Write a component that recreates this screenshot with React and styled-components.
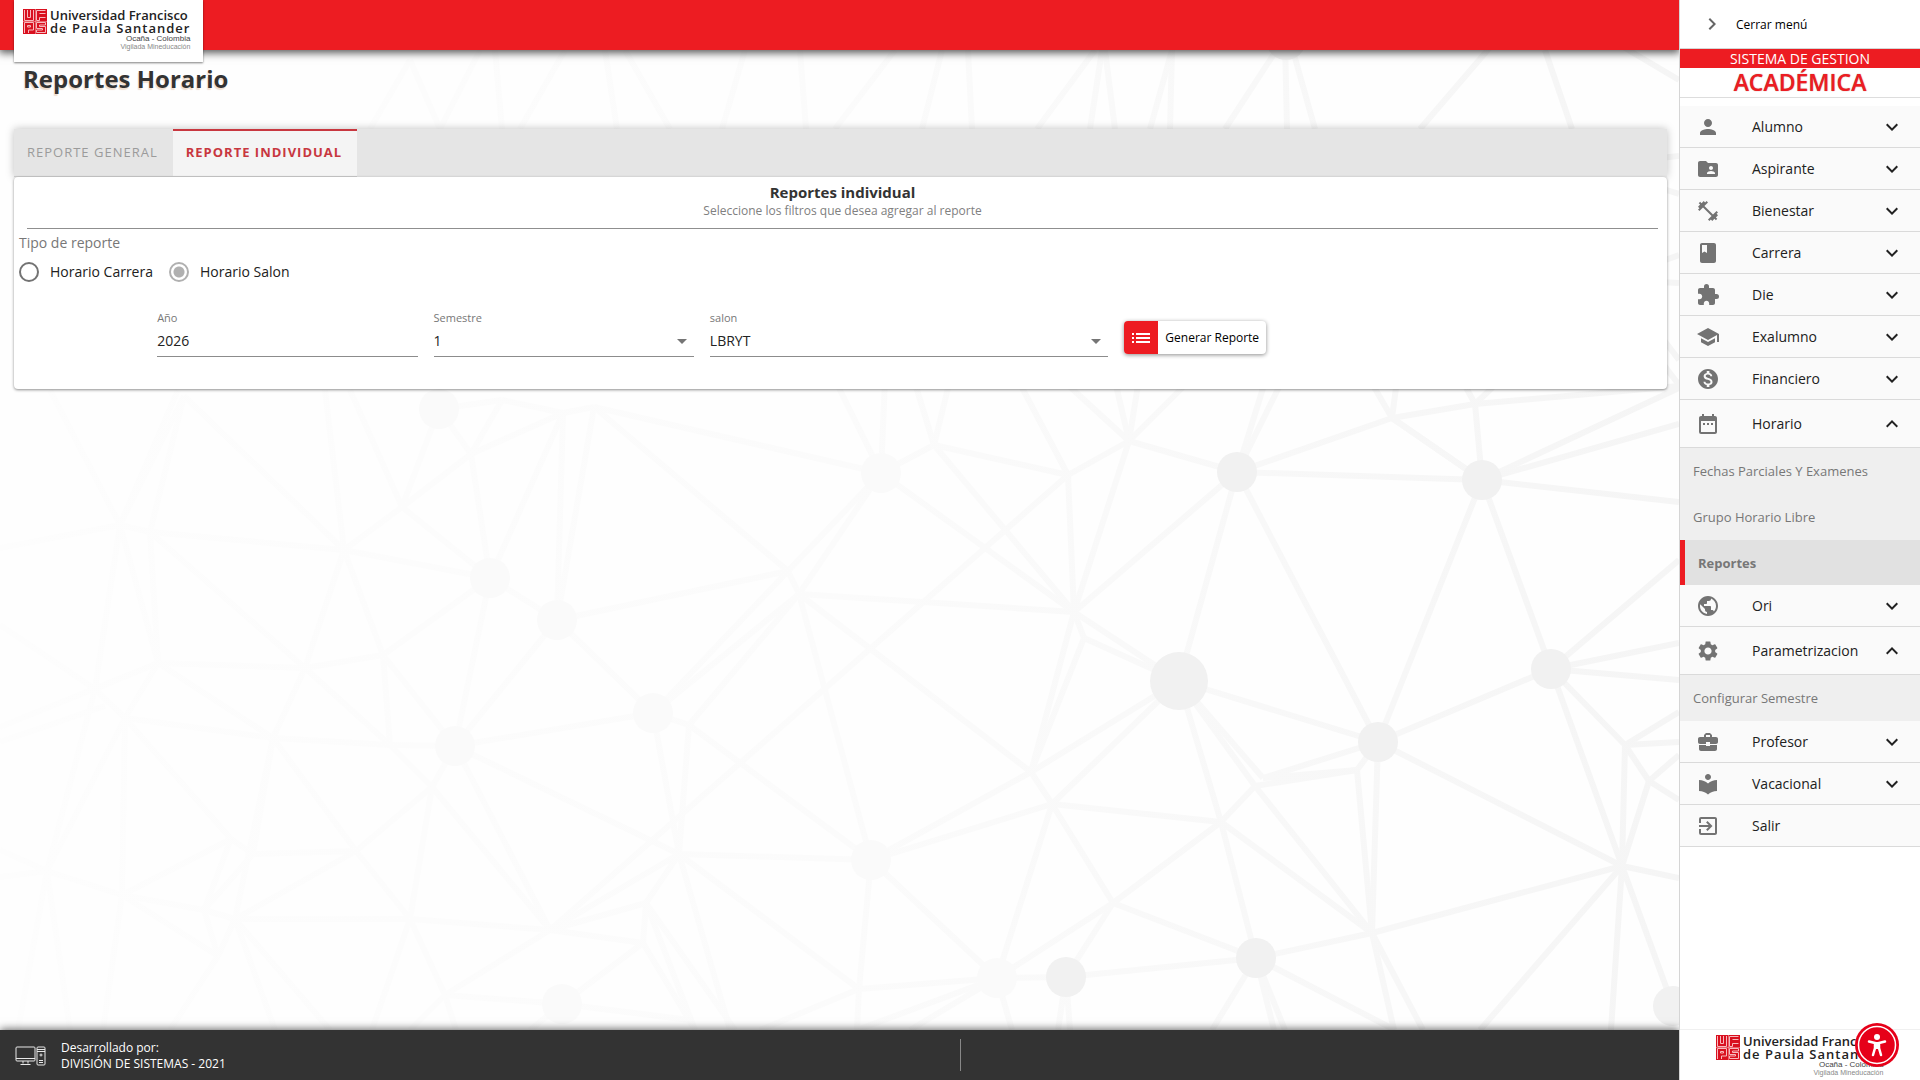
import React, { useState } from "react";
import styled, { createGlobalStyle, css } from "styled-components";
import {
  MdPerson, MdFolderShared, MdFitnessCenter, MdBook, MdExtension, MdSchool,
  MdMonetizationOn, MdDateRange, MdPublic, MdSettings, MdBusinessCenter,
  MdLocalLibrary, MdExitToApp, MdKeyboardArrowDown, MdKeyboardArrowUp,
  MdChevronRight, MdList,
} from "react-icons/md";

const RED = "#ed1c22";
const SANS = '"Open Sans", "Noto Sans", sans-serif';

const GlobalStyle = createGlobalStyle`
  *, *::before, *::after { box-sizing: border-box; }
  body { margin: 0; background: #fefefe; font-family: ${SANS}; color: #212121; }
  button, input, select { font-family: inherit; color: inherit; }
  h1, h2, p, ul, hr, fieldset { margin: 0; padding: 0; border: 0; }
  ul { list-style: none; }
`;

const Page = styled.div`
  display: flex;
  min-height: 100vh;
`;

const Main = styled.div`
  position: relative;
  isolation: isolate;
  flex: 1;
  min-width: 0;
  display: flex;
  flex-direction: column;
  overflow: hidden;
`;

const Backdrop = styled.svg`
  position: absolute;
  inset: 0;
  width: 100%;
  height: 100%;
  z-index: -1;
`;

const Header = styled.header`
  height: 50px;
  padding-left: 14px;
  background: ${RED};
  box-shadow: 0 2px 8px 1px rgba(0, 0, 0, 0.65);
`;

const LogoCard = styled.div`
  width: 189px;
  height: 62px;
  padding: 9px;
  background: #fff;
  box-shadow: 0 1px 2px rgba(0, 0, 0, 0.5);
`;

const LogoRow = styled.div`
  display: flex;
  gap: 3px;
  width: max-content;
`;

const LogoText = styled.div`
  display: flex;
  flex-direction: column;
  color: #222;
  font-size: 13px;
  font-weight: 600;
  line-height: 13px;
  white-space: nowrap;
`;

const LogoSpaced = styled.span`
  letter-spacing: 1px;
`;

const LogoSmall = styled.span`
  align-self: flex-end;
  font-family: "Liberation Sans", sans-serif;
  font-weight: 400;
  font-size: ${(p) => (p.$tiny ? "7px" : "8px")};
  line-height: 8px;
  color: ${(p) => (p.$tiny ? "#888" : "#444")};
`;

const Content = styled.main`
  flex: 1;
  padding: 11px 12px 0 14px;
`;

const PageTitle = styled.h1`
  padding-left: 9px;
  margin-bottom: 33px;
  font-size: 24px;
  line-height: 35px;
  font-weight: 700;
  color: #333;
  text-shadow: -1px 2px 1px #f0dfd0;
`;

const TabBar = styled.div`
  display: flex;
  height: 48px;
  background: #e5e5e5;
  box-shadow: 0 0 8px rgba(0, 0, 0, 0.25);
`;

const Tab = styled.button`
  padding: 0 15px 4px 13px;
  border: 0;
  border-top: 2px solid transparent;
  border-bottom: 1px solid #ccc;
  background: none;
  font-size: 13px;
  letter-spacing: 1px;
  color: #9b9b9b;
  ${(p) => p.$active && css`
    background: #f4f4f4;
    border-top-color: #c8373f;
    color: #c8373f;
    font-weight: 700;
  `}
`;

const Panel = styled.section`
  position: relative;
  padding: 5px 6px 32px 5px;
  background: #fff;
  border-radius: 4px;
  box-shadow: 0 1px 3px rgba(0, 0, 0, 0.45);
`;

const PanelHead = styled.div`
  margin: 0 3px 0 8px;
  padding-bottom: 9px;
  border-bottom: 1px solid #8f8f8f;
  text-align: center;
`;

const PanelTitle = styled.h2`
  font-size: 15px;
  line-height: 21px;
  font-weight: 700;
  color: #333;
`;

const PanelHint = styled.p`
  font-size: 12px;
  line-height: 16px;
  color: #808080;
`;

const RadioGroup = styled.fieldset`
  display: flex;
  flex-wrap: wrap;
  gap: 8px 16px;
`;

const Legend = styled.legend`
  padding: 3px 0 0;
  margin-bottom: 8px;
  font-size: 14px;
  line-height: 22px;
  color: #777;
`;

const RadioLabel = styled.label`
  display: flex;
  align-items: center;
  gap: 11px;
  font-size: 14px;
  line-height: 20px;
`;

const Radio = styled.input`
  appearance: none;
  width: 20px;
  height: 20px;
  margin: 0;
  border: 2px solid #737373;
  border-radius: 50%;
  &:checked {
    border-color: #b0b0b0;
    background: radial-gradient(circle, #b0b0b0 5px, transparent 6px);
  }
`;

const Filters = styled.div`
  display: grid;
  grid-template-columns: repeat(12, 1fr);
  gap: 16px;
  margin-top: 28px;
`;

const Field = styled.label`
  display: flex;
  flex-direction: column;
  grid-column: ${(p) => p.$column};
  font-size: 11px;
  line-height: 16px;
  color: #777;
`;

const controlStyle = css`
  width: 100%;
  height: 31px;
  padding: 0 0 1px;
  border: 0;
  border-bottom: 1px solid #8c8c8c;
  border-radius: 0;
  background: transparent;
  font-size: 14px;
  color: #222;
  outline: none;
`;

const TextInput = styled.input`${controlStyle}`;

const SelectBox = styled.span`
  display: grid;
  align-items: center;
  &::after {
    content: "";
    grid-area: 1 / 1;
    justify-self: end;
    margin-right: 7px;
    border: 5px solid transparent;
    border-top-color: #757575;
    border-bottom: 0;
    pointer-events: none;
  }
`;

const Select = styled.select`
  ${controlStyle}
  grid-area: 1 / 1;
  appearance: none;
`;

const GenerateButton = styled.button`
  grid-column: 9 / span 3;
  justify-self: start;
  align-self: start;
  display: flex;
  align-items: center;
  height: 33px;
  margin-top: 11px;
  padding: 0;
  border: 0;
  border-radius: 4px;
  background: #fff;
  box-shadow: 0 1px 4px rgba(0, 0, 0, 0.45);
  overflow: hidden;
  font-size: 12px;
  white-space: nowrap;
  color: #000;
`;

const ButtonIcon = styled.span`
  display: flex;
  align-items: center;
  justify-content: center;
  width: 34px;
  height: 100%;
  background: ${RED};
  color: #fff;
`;

const ButtonText = styled.span`
  padding: 0 7px;
`;

const Footer = styled.footer`
  display: grid;
  grid-template-columns: 50vw 1fr;
  align-items: center;
  height: 50px;
  background: #333;
  box-shadow: 0 -1px 8px rgba(0, 0, 0, 0.6);
  color: #fff;
`;

const Credits = styled.div`
  display: flex;
  align-items: center;
  gap: 15px;
  padding: 2px 0 0 15px;
  font-size: 12px;
  line-height: 16px;
`;

const FooterDivider = styled.div`
  height: 32px;
  border-left: 1px solid #888;
`;

const Sidebar = styled.aside`
  display: flex;
  flex-direction: column;
  width: 241px;
  flex: none;
  border-left: 1px solid #d5d5d5;
  background: #fff;
`;

const CloseMenu = styled.button`
  display: flex;
  align-items: center;
  gap: 12px;
  height: 49px;
  padding: 0 20px;
  border: 0;
  border-bottom: 1px solid #d5d5d5;
  background: #fff;
  font-size: 12px;
  color: #000;
  svg { color: #666; }
`;

const Brand = styled.div`
  margin-bottom: 8px;
  border-bottom: 1px solid #ddd;
  text-align: center;
`;

const BrandBand = styled.p`
  background: ${RED};
  color: #fff;
  font-size: 14px;
  line-height: 19px;
`;

const BrandName = styled.p`
  color: ${RED};
  font-size: 23px;
  font-weight: 600;
  line-height: 29px;
  text-shadow: 0 0 1px #a66;
`;

const MenuItem = styled.button`
  display: grid;
  grid-template-columns: 24px minmax(0, 1fr) 24px;
  align-items: center;
  width: 100%;
  height: ${(p) => (p.$open ? 48 : 42)}px;
  padding: 0 16px;
  border: 0;
  border-bottom: 1px solid #dadada;
  background: #fafafa;
  text-align: left;
  font-size: 14px;
  white-space: nowrap;
  > svg:first-child { color: #737373; }
`;

const MenuLabel = styled.span`
  padding-left: 32px;
`;

const SubLink = styled.a`
  display: flex;
  align-items: center;
  height: 46px;
  padding-left: 13px;
  background: #efefef;
  color: #777;
  font-size: 13px;
  text-decoration: none;
  ${(p) => p.$active && css`
    height: 45px;
    border-left: 5px solid ${RED};
    background: #e1e1e1;
    font-weight: 700;
  `}
`;

const SideFooter = styled.div`
  height: 51px;
  margin-top: auto;
  padding: 5px 0 0 36px;
  border-top: 1px solid #f0f0f0;
  overflow: hidden;
`;

const AccessButton = styled.button`
  position: fixed;
  right: 21px;
  bottom: 13px;
  width: 44px;
  height: 44px;
  padding: 0;
  border: 0;
  border-radius: 50%;
  background: none;
`;

const nodes = {
  a: [120, 525], b: [150, 532], c: [344, 550], d: [184, 396], e: [402, 507], f: [439, 409],
  g: [502, 400], h: [471, 454], i: [563, 413], j: [594, 407], k: [490, 578], l: [557, 620],
  m: [653, 713], n: [455, 746], o: [881, 473], p: [788, 571], q: [799, 594], r: [871, 860],
  s: [562, 1004], t: [95, 689], u: [158, 663], v: [305, 668], w: [383, 655], x: [125, 718],
  y: [273, 738], z: [390, 745], A: [432, 787], B: [356, 851], C: [253, 854], D: [231, 839],
  E: [47, 871], F: [122, 895], G: [204, 910], H: [235, 919], I: [410, 919], J: [550, 930],
  K: [679, 854], L: [689, 725], M: [646, 903], N: [643, 943], O: [445, 995], P: [218, 956],
  Q: [859, 989], R: [934, 445], S: [1068, 475], T: [1129, 441], U: [1237, 472], V: [1482, 480],
  W: [1074, 612], X: [1179, 681], Y: [1084, 638], Z: [1031, 772], 1: [1052, 804],
  2: [1378, 742], 3: [1551, 669], 4: [1221, 822], 5: [1255, 786], 6: [1263, 778],
  7: [1357, 770], 8: [1372, 933], 9: [1622, 866], "@": [1113, 903], "#": [1256, 958],
  "%": [1066, 977], "&": [997, 978], "+": [1392, 418], "=": [1475, 404], "?": [1625, 745],
  "!": [1649, 781], "*": [1673, 1006],
};

const links = (
  "ab bc ad bd cd ce ck he hf hg hi hk fg fe gi ij ki li lj jo jp op oq pl pm pq qm qL ek kl lm kn ln nm " +
  "at au bu bv uv ut ux xt xy uy vy vw cv cw wk wn wz vz yz zn zA yC yB yH xD xF xE tE DC CB DF DG CG HB BI AB AI AJ nA nJ nK " +
  "EF FG GH HI IJ FP GP PH JK JM JN JO JS MN MK KL mK mL Lr Kr KQ rQ qr Ns IO Os qW qZ oR RS ST RW oW SW TW TU UW UX U2 UV " +
  "+U +V +V =+ =V V2 V3 WX WY XY WZ YZ ZX Zr 1r 1Z 1X 14 1@ 1& X2 X4 X5 X6 62 67 57 27 28 78 45 4@ 4# 48 58 23 29 39 3? ?9 ?! !9 " +
  "89 8# #% #@ @& @% %& &r &Q 9*"
).split(" ");

const strays = [
  [0, 548, 120, 525], [0, 625, 95, 689], [0, 727, 158, 663], [0, 742, 105, 706],
  [0, 850, 47, 871], [0, 877, 47, 871], [47, 871, 18, 1030], [47, 871, 70, 1030],
  [122, 895, 103, 1030], [218, 956, 170, 1030], [235, 919, 275, 1030], [235, 919, 330, 1030],
  [410, 919, 372, 1030], [445, 995, 410, 1030], [445, 995, 456, 1030],
  [562, 1004, 530, 1030], [562, 1004, 690, 1020], [646, 903, 695, 1030], [646, 903, 735, 1030],
  [679, 854, 730, 1030], [643, 943, 695, 1030], [859, 989, 760, 1030], [859, 989, 857, 1030],
  [120, 525, 50, 390], [120, 525, 178, 390], [344, 550, 325, 390], [402, 507, 350, 390],
  [881, 473, 835, 380], [881, 473, 885, 380], [934, 445, 914, 380], [934, 445, 950, 380],
  [1068, 475, 1018, 380], [1129, 441, 1068, 385], [1129, 441, 1116, 385], [1129, 441, 1138, 385],
  [1129, 441, 1185, 385], [1237, 472, 1264, 385], [1237, 472, 1280, 385],
  [1392, 418, 1370, 380], [1392, 418, 1397, 380], [1475, 404, 1462, 380], [1475, 404, 1495, 385],
  [1475, 404, 1679, 386], [1482, 480, 1679, 388], [1482, 480, 1679, 424], [1482, 480, 1679, 502],
  [1551, 669, 1679, 560], [1551, 669, 1679, 643], [1551, 669, 1679, 680],
  [1625, 745, 1679, 712], [1625, 745, 1679, 742], [1649, 781, 1679, 755], [1649, 781, 1679, 800],
  [1622, 866, 1679, 878], [1622, 866, 1480, 1030], [1622, 866, 1611, 1030],
  [1372, 933, 1394, 1030], [1372, 933, 1423, 1030], [1256, 958, 1212, 1030],
  [1256, 958, 1274, 1030], [1256, 958, 1285, 1030], [1256, 958, 1395, 1030],
  [1066, 977, 1058, 1030], [1066, 977, 1070, 1030], [997, 978, 1012, 1030], [997, 978, 857, 1030],
  [997, 978, 910, 1030], [410, 60, 370, 129], [410, 60, 440, 129], [480, 50, 440, 129],
  [495, 50, 502, 129], [565, 50, 520, 129], [605, 50, 617, 129], [625, 50, 670, 129],
  [745, 50, 722, 129], [800, 50, 806, 129], [895, 50, 835, 129], [942, 50, 922, 129],
  [968, 50, 972, 129], [1095, 50, 1037, 129], [1102, 50, 1090, 129], [1105, 50, 1115, 129],
  [1172, 50, 1150, 129], [1172, 50, 1170, 129], [1283, 40, 1225, 129], [1285, 40, 1287, 129],
  [1290, 40, 1315, 129], [1492, 45, 1420, 129], [1545, 50, 1572, 129], [1620, 45, 1679, 80],
  [1660, 158, 1679, 156], [1660, 188, 1679, 194], [1660, 262, 1679, 255], [1660, 282, 1679, 283],
  [1660, 335, 1679, 360], [1660, 360, 1679, 385],
];

const discs = [
  ["f", 20, 1], ["k", 20, 1], ["l", 20, 1], ["m", 20, 1], ["n", 20, 1], ["o", 20, 1], ["r", 20, 1],
  ["s", 20, 1], ["&", 20, 1], ["U", 20], ["V", 20], ["X", 29], ["2", 20], ["3", 20], ["#", 20],
  ["%", 20], ["*", 20],
];

function Network() {
  return (
    <Backdrop viewBox="0 0 1679 1080" preserveAspectRatio="xMaxYMid slice" aria-hidden="true">
      <defs>
        <linearGradient id="fade" gradientUnits="userSpaceOnUse" x1="0" y1="0" x2="1679" y2="0">
          <stop offset="0" stopColor="#fdfdfd" />
          <stop offset="0.5" stopColor="#fbfbfb" />
          <stop offset="1" stopColor="#f5f5f5" />
        </linearGradient>
      </defs>
      <g stroke="url(#fade)" strokeWidth="6">
        {links.map((k, n) => {
          const [p, q] = [nodes[k[0]], nodes[k[1]]];
          return <path key={n} d={`M${p} L${q}`} />;
        })}
        {strays.map(([x1, y1, x2, y2], n) => (
          <path key={n} d={`M${x1} ${y1} L${x2} ${y2}`} />
        ))}
      </g>
      {discs.map(([k, r, light]) => (
        <circle key={k} cx={nodes[k][0]} cy={nodes[k][1]} r={r} fill={light ? "#fafafa" : "#f1f1f1"} />
      ))}
      <circle cx="1286" cy="40" r="20" fill="#f1f1f1" />
    </Backdrop>
  );
}

function Logo() {
  return (
    <LogoRow>
      <svg width="24" height="25" viewBox="0 0 24 25" aria-hidden="true">
        <rect width="24" height="25" fill="#d9101f" />
        <g fill="none" stroke="#f7b9bd" strokeWidth="1">
          <path d="M1.5 1v10.5h9V1M4.5 1v7.500h3V1" />
          <path d="M22.500 1.500h-9v10h3v-3h6M22.500 4.500h-6" />
          <path d="M1.500 24V13.500h9v7.500h-5v3M4.500 16.500h3v1.500h-3z" />
          <path d="M22.500 13.500h-9v6h6v1.500h-6v2.500h9v-6h-6v-1.500h6z" />
          <path d="M0 12.500h24M12.500 0v25" strokeWidth="0.500" />
        </g>
      </svg>
      <LogoText>
        <span>Universidad Francisco</span>
        <LogoSpaced>de Paula Santander</LogoSpaced>
        <LogoSmall>Ocaña - Colombia</LogoSmall>
        <LogoSmall $tiny>Vigilada Mineducación</LogoSmall>
      </LogoText>
    </LogoRow>
  );
}

const menu = [
  { label: "Alumno", icon: MdPerson },
  { label: "Aspirante", icon: MdFolderShared },
  { label: "Bienestar", icon: MdFitnessCenter },
  { label: "Carrera", icon: MdBook },
  { label: "Die", icon: MdExtension },
  { label: "Exalumno", icon: MdSchool },
  { label: "Financiero", icon: MdMonetizationOn },
  { label: "Horario", icon: MdDateRange, children: ["Fechas Parciales Y Examenes", "Grupo Horario Libre", "Reportes"] },
  { label: "Ori", icon: MdPublic },
  { label: "Parametrizacion", icon: MdSettings, children: ["Configurar Semestre"] },
  { label: "Profesor", icon: MdBusinessCenter },
  { label: "Vacacional", icon: MdLocalLibrary },
  { label: "Salir", icon: MdExitToApp, plain: true },
];

export default function App() {
  const [kind, setKind] = useState("salon");
  return (
    <>
      <GlobalStyle />
      <Page>
        <Main>
          <Network />
          <Header>
            <LogoCard><Logo /></LogoCard>
          </Header>
          <Content>
            <PageTitle>Reportes Horario</PageTitle>
            <TabBar role="tablist">
              <Tab role="tab" aria-selected="false">REPORTE GENERAL</Tab>
              <Tab role="tab" aria-selected="true" $active>REPORTE INDIVIDUAL</Tab>
            </TabBar>
            <Panel>
              <PanelHead>
                <PanelTitle>Reportes individual</PanelTitle>
                <PanelHint>Seleccione los filtros que desea agregar al reporte</PanelHint>
              </PanelHead>
              <RadioGroup>
                <Legend>Tipo de reporte</Legend>
                <RadioLabel>
                  <Radio type="radio" name="kind" checked={kind === "carrera"} onChange={() => setKind("carrera")} />
                  Horario Carrera
                </RadioLabel>
                <RadioLabel>
                  <Radio type="radio" name="kind" checked={kind === "salon"} onChange={() => setKind("salon")} />
                  Horario Salon
                </RadioLabel>
              </RadioGroup>
              <Filters>
                <Field $column="2 / span 2">
                  Año
                  <TextInput type="text" defaultValue="2026" />
                </Field>
                <Field $column="4 / span 2">
                  Semestre
                  <SelectBox><Select defaultValue="1"><option>1</option><option>2</option></Select></SelectBox>
                </Field>
                <Field $column="6 / span 3">
                  salon
                  <SelectBox><Select><option>LBRYT</option></Select></SelectBox>
                </Field>
                <GenerateButton type="button">
                  <ButtonIcon><MdList size={24} /></ButtonIcon>
                  <ButtonText>Generar Reporte</ButtonText>
                </GenerateButton>
              </Filters>
            </Panel>
          </Content>
          <Footer>
            <Credits>
              <svg width="31" height="20" viewBox="0 0 31 20" fill="none" stroke="#e8e8e8" aria-hidden="true">
                <rect x="1" y="1" width="19" height="14" rx="1" />
                <path d="M1 12.500h19M8 15v2.500M13 15v2.500M5.500 18.500h10" />
                <rect x="22" y="1" width="8" height="18" rx="1" />
                <path d="M22 3.500h8M22 5.500h8M24 14.500h4M24 16.500h4" />
                <circle cx="26" cy="9" r="1" />
              </svg>
              <div>
                <p>Desarrollado por:</p>
                <p>DIVISIÓN DE SISTEMAS - 2021</p>
              </div>
            </Credits>
            <FooterDivider />
          </Footer>
        </Main>
        <Sidebar>
          <CloseMenu type="button"><MdChevronRight size={24} />Cerrar menú</CloseMenu>
          <Brand>
            <BrandBand>SISTEMA DE GESTION</BrandBand>
            <BrandName>ACADÉMICA</BrandName>
          </Brand>
          <nav>
            <ul>
              {menu.map(({ label, icon: Icon, children, plain }) => (
                <li key={label}>
                  <MenuItem type="button" $open={!!children}>
                    <Icon size={24} />
                    <MenuLabel>{label}</MenuLabel>
                    {!plain && (children ? <MdKeyboardArrowUp size={24} /> : <MdKeyboardArrowDown size={24} />)}
                  </MenuItem>
                  {children && children.map((c) => (
                    <SubLink key={c} href="#" $active={c === "Reportes"}>{c}</SubLink>
                  ))}
                </li>
              ))}
            </ul>
          </nav>
          <SideFooter><Logo /></SideFooter>
        </Sidebar>
      </Page>
      <AccessButton type="button" aria-label="Accesibilidad">
        <svg width="44" height="44" viewBox="0 0 44 44" aria-hidden="true">
          <circle cx="22" cy="22" r="22" fill="#e60019" />
          <circle cx="22" cy="22" r="18.500" fill="none" stroke="#fff" strokeWidth="1.500" />
          <circle cx="22" cy="14" r="3" fill="#fff" />
          <path d="M14 18.500l6 1.500v5l-2 7M30 18.500l-6 1.500v5l2 7" fill="none" stroke="#fff" strokeWidth="2.500" strokeLinecap="round" />
          <path d="M19 19h6v7h-6z" fill="#fff" />
        </svg>
      </AccessButton>
    </>
  );
}
